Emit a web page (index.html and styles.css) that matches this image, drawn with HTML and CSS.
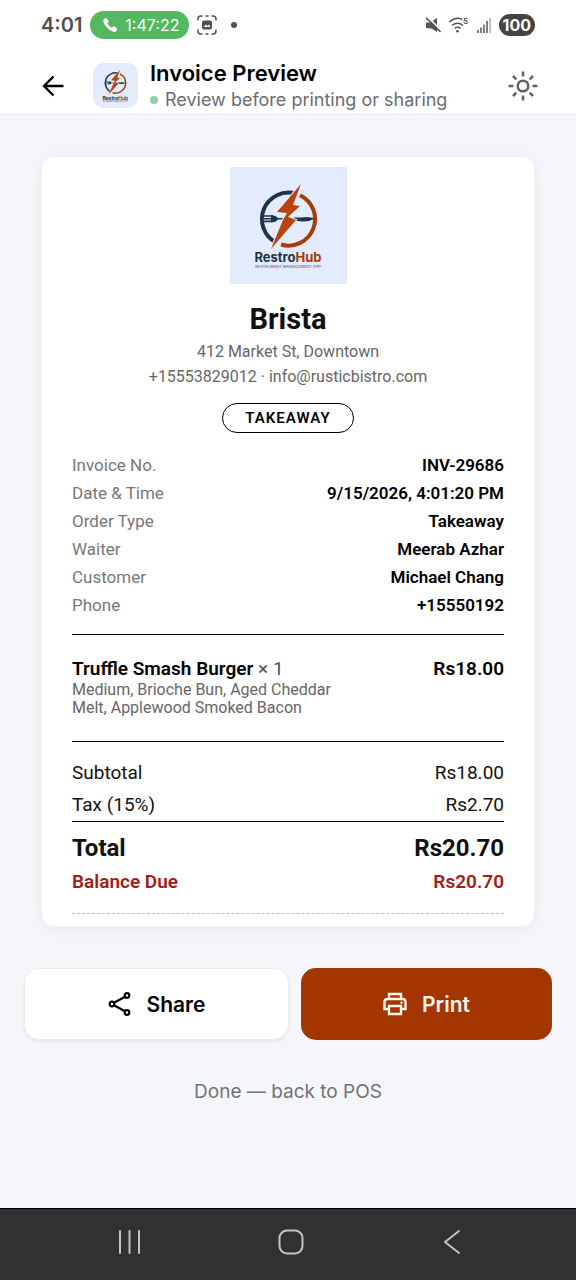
FILE: index.html
```html
<!DOCTYPE html>
<html lang="en">
<head>
<meta charset="utf-8">
<meta name="viewport" content="width=device-width, initial-scale=1">
<title>Invoice Preview</title>
<link rel="stylesheet" href="styles.css">
</head>
<body>
<div class="screen">
  <div class="status">
    <div class="status-left">
      <span class="clock">4:01</span>
      <span class="call">
        <svg width="16" height="16" viewBox="0 0 16 16"><path d="M1.500 2.500 L4 .7 L7 4.200 L5.300 6.300 Q7 9 9.800 10.700 L12 9 L15.500 12 L13.500 14.800 Q11 16 6.500 12 Q.5 6.500 1.500 2.500Z" fill="#fff"/></svg>
        1:47:22
      </span>
      <svg width="20" height="20" viewBox="0 0 20 20" fill="none" stroke="#505050" stroke-width="1.500" stroke-linecap="round"><path d="M1 5V4Q1 1 4 1H5 M9 1H11 M15 1H16Q19 1 19 4V5 M19 15V16Q19 19 16 19H15 M11 19H9 M5 19H4Q1 19 1 16V15"/><rect x="5" y="5.500" width="10" height="9" rx="2" fill="#505050" stroke="none"/><path d="M6.500 12 L9 9.500 L10.500 11 L12 9.500 L13.500 12Z" fill="#fff" stroke="none"/></svg>
      <span class="dot"></span>
    </div>
    <div class="status-right">
      <svg width="16" height="16" viewBox="0 0 16 16"><path d="M1 5.500H5.500L12 1V15L6.500 11.500L1 11Z" fill="#555"/><path d="M2.500 0L17 14" stroke="#fff" stroke-width="1.600"/><path d="M1 .8L15.500 15" stroke="#555" stroke-width="1.600"/></svg>
      <svg width="20" height="18" viewBox="0 0 20 18" fill="none" stroke="#555" stroke-width="1.600"><path d="M.5 6Q7 0 13 3.500 M3 9.500Q8.500 5 14 9.500 M5.500 12.500Q8.500 10 11.500 12.500"/><circle cx="8.500" cy="15.200" r="1.300" fill="#555" stroke="none"/><text x="14" y="8" class="wifi-band">5</text></svg>
      <svg width="14" height="16" viewBox="0 0 14 16" stroke="#555" stroke-width="1.500"><path d="M1 16V13 M4 16V10.500 M7 16V7.500 M10 16V4"/><path d="M13 16V1" stroke="#aaa"/></svg>
      <span class="battery">100</span>
    </div>
  </div>

  <header class="header">
    <button class="icon-btn" aria-label="Back"><svg width="22" height="22" viewBox="0 0 22 22" fill="none" stroke="#000" stroke-width="2.400"><path d="M21.500 11H2.500 M11.500 1.500L2 11L11.500 20.500"/></svg></button>
    <svg class="header-logo" viewBox="0 0 117 117">
      <rect width="117" height="117" rx="28" fill="#e4ebfc"/>
      <path d="M66 26.700A26.500 26.500 0 0 0 46 75.500" fill="none" stroke="#1f3347" stroke-width="4"/>
      <path d="M70 28.200A26.500 26.500 0 0 1 51 77.500" fill="none" stroke="#a63c08" stroke-width="4"/>
      <path d="M34 49H43 M34 51.700H54 M34 54.400H43" stroke="#1f3347" stroke-width="1.600"/>
      <path d="M41 48.200Q47 48.200 48 51.700Q47 55.200 41 55.200Z" fill="#1f3347"/>
      <path d="M64 50.500H71Q78 49 85 51.500Q77 56 69 54H62Z" fill="#1f3347"/>
      <path d="M71 17L47 45L57 46L53 53L41 82L66 53L58 50L70 39L63 38Z" fill="#b8430b" stroke="#e4ebfc" stroke-width="2" paint-order="stroke"/>
      <text x="58" y="95" text-anchor="middle" class="logo-name"><tspan fill="#1f3347">Restro</tspan><tspan fill="#a63c08">Hub</tspan></text>
      <text x="58" y="101" text-anchor="middle" class="logo-tag">RESTAURANT MANAGEMENT APP</text>
    </svg>
    <div class="heading">
      <h1 class="title">Invoice Preview</h1>
      <p class="subtitle"><span class="live"></span>Review before printing or sharing</p>
    </div>
    <button class="icon-btn" aria-label="Toggle theme"><svg width="30" height="30" viewBox="0 0 30 30" fill="none" stroke="#606266" stroke-width="2.500"><circle cx="15" cy="15" r="5.300"/><path d="M15 .5V5.500 M15 24.500V29.500 M.5 15H5.500 M24.500 15H29.500 M5 5L8.300 8.300 M21.700 21.700L25 25 M25 5L21.700 8.300 M8.300 21.700L5 25"/></svg></button>
  </header>

  <main class="main">
    <section class="receipt">
      <svg class="receipt-logo" viewBox="0 0 117 117">
        <rect width="117" height="117" fill="#e4ebfc"/>
        <path d="M66 26.700A26.500 26.500 0 0 0 46 75.500" fill="none" stroke="#1f3347" stroke-width="4"/>
        <path d="M70 28.200A26.500 26.500 0 0 1 51 77.500" fill="none" stroke="#a63c08" stroke-width="4"/>
        <path d="M34 49H43 M34 51.700H54 M34 54.400H43" stroke="#1f3347" stroke-width="1.600"/>
        <path d="M41 48.200Q47 48.200 48 51.700Q47 55.200 41 55.200Z" fill="#1f3347"/>
        <path d="M64 50.500H71Q78 49 85 51.500Q77 56 69 54H62Z" fill="#1f3347"/>
        <path d="M71 17L47 45L57 46L53 53L41 82L66 53L58 50L70 39L63 38Z" fill="#b8430b" stroke="#e4ebfc" stroke-width="2" paint-order="stroke"/>
        <text x="58" y="95" text-anchor="middle" class="logo-name"><tspan fill="#1f3347">Restro</tspan><tspan fill="#a63c08">Hub</tspan></text>
        <text x="58" y="101" text-anchor="middle" class="logo-tag">RESTAURANT MANAGEMENT APP</text>
      </svg>
      <h2 class="name">Brista</h2>
      <p class="contact">412 Market St, Downtown<br>+15553829012 · info@rusticbistro.com</p>
      <span class="pill">TAKEAWAY</span>
      <dl class="meta">
        <div class="row"><dt>Invoice No.</dt><dd>INV-29686</dd></div>
        <div class="row"><dt>Date &amp; Time</dt><dd>9/15/2026, 4:01:20 PM</dd></div>
        <div class="row"><dt>Order Type</dt><dd>Takeaway</dd></div>
        <div class="row"><dt>Waiter</dt><dd>Meerab Azhar</dd></div>
        <div class="row"><dt>Customer</dt><dd>Michael Chang</dd></div>
        <div class="row"><dt>Phone</dt><dd>+15550192</dd></div>
      </dl>
      <div class="item">
        <div class="row item-row"><span><b>Truffle Smash Burger</b> <span class="qty">× 1</span></span><b>Rs18.00</b></div>
        <p class="options">Medium, Brioche Bun, Aged Cheddar Melt, Applewood Smoked Bacon</p>
      </div>
      <dl class="sums">
        <div class="row"><dt>Subtotal</dt><dd>Rs18.00</dd></div>
        <div class="row"><dt>Tax (15%)</dt><dd>Rs2.70</dd></div>
      </dl>
      <dl class="totals">
        <div class="row total"><dt>Total</dt><dd>Rs20.70</dd></div>
        <div class="row due"><dt>Balance Due</dt><dd>Rs20.70</dd></div>
      </dl>
    </section>
    <div class="actions">
      <button class="btn share"><svg width="24" height="24" viewBox="0 0 24 24" fill="none" stroke="#000" stroke-width="2.200"><circle cx="19" cy="3.500" r="2.300"/><circle cx="4" cy="12" r="2.300"/><circle cx="19" cy="20.500" r="2.300"/><path d="M6 10.800L17 4.700 M6 13.200L17 19.300"/></svg>Share</button>
      <button class="btn print"><svg width="24" height="24" viewBox="0 0 24 24" fill="none" stroke="#fff5ee" stroke-width="2.400"><path d="M6 7V2H18V7 M6 17H1.500V10Q1.500 7 4.500 7H19.500Q22.500 7 22.500 10V17H18"/><path d="M6 14H18V22H6Z"/><circle cx="18.500" cy="10.800" r="1.200" fill="#fff5ee" stroke="none"/></svg>Print</button>
    </div>
    <button class="done">Done — back to POS</button>
  </main>

  <nav class="nav">
    <button class="icon-btn" aria-label="Recent apps"><svg width="26" height="26" viewBox="0 0 26 26" stroke="#c4c4c4" stroke-width="2" stroke-linecap="round"><path d="M3 2V24 M12.500 2V24 M22 2V24"/></svg></button>
    <button class="icon-btn" aria-label="Home"><svg width="26" height="26" viewBox="0 0 26 26" fill="none" stroke="#c4c4c4" stroke-width="2"><rect x="1.500" y="1.500" width="23" height="23" rx="7.500"/></svg></button>
    <button class="icon-btn" aria-label="Go back"><svg width="26" height="26" viewBox="0 0 26 26" fill="none" stroke="#c4c4c4" stroke-width="2" stroke-linecap="round" stroke-linejoin="round"><path d="M20 2L6 13L20 24"/></svg></button>
  </nav>
</div>
</body>
</html>
```
FILE: styles.css
```css
* { box-sizing: border-box; }
body { margin: 0; font-family: Inter, sans-serif; color: #000; background: #f5f6f9; }
h1, h2, p, dl, dd { margin: 0; }
button { font: inherit; border: 0; background: none; padding: 0; }
svg { display: block; flex: none; }
.screen { min-height: 100vh; display: flex; flex-direction: column; }

.status { height: 50px; padding: 0 41px; display: flex; justify-content: space-between; align-items: center; background: #fff; color: #505050; }
.status-left, .status-right { display: flex; align-items: center; gap: 8px; }
.clock { font-size: 20px; font-weight: 600; }
.call { display: flex; align-items: center; gap: 7px; height: 28px; padding: 0 10px 0 12px; border-radius: 14px; background: #53b860; color: #fff; font-size: 16px; }
.dot { width: 6px; height: 6px; margin-left: 6px; border-radius: 50%; background: #505050; }
.wifi-band { font: 700 8px Inter, sans-serif; fill: #555; stroke: none; }
.battery { height: 22px; line-height: 22px; padding: 0 4px; border-radius: 11px; background: #444; color: #fff; font-size: 16px; font-weight: 700; }

.header { height: 65px; padding: 7px 38px 0 42px; display: flex; align-items: center; background: #fff; border-bottom: 1px solid #e6e8ec; }
.header-logo { width: 45px; height: 45px; margin: 0 12px 0 29px; }
.heading { flex: 1; }
.title { font-size: 22px; line-height: 28px; font-weight: 600; }
.subtitle { display: flex; align-items: center; gap: 7px; font-size: 18px; line-height: 26px; color: #6b6d72; }
.live { width: 8px; height: 8px; border-radius: 50%; background: #8fd0a6; }
.logo-name { font: 700 13px Inter, sans-serif; }
.logo-tag { font: 400 4px Inter, sans-serif; fill: #44505e; }

.main { flex: 1; display: flex; flex-direction: column; padding: 42px 24px 0; }
.receipt { margin: 0 18px; padding: 10px 30px 12px; display: flex; flex-direction: column; background: #fff; border-radius: 12px; box-shadow: 0 2px 16px rgba(0, 0, 0, .06); font-family: Roboto, sans-serif; }
.receipt-logo { width: 117px; height: 117px; align-self: center; }
.name { margin-top: 17px; text-align: center; font-size: 29px; line-height: 36px; font-weight: 700; color: #111; }
.contact { margin-top: 2px; text-align: center; font-size: 16px; line-height: 25px; color: #666; }
.pill { align-self: center; margin-top: 14px; height: 30px; line-height: 28px; padding: 0 22px; border: 1px solid #000; border-radius: 15px; font-size: 15px; font-weight: 600; letter-spacing: 1px; }
.row { display: flex; justify-content: space-between; }
.meta { margin-top: 18px; padding-bottom: 15px; border-bottom: 1px solid #000; font-size: 17px; line-height: 28px; }
.meta dt { color: #777; }
.meta dd { font-weight: 600; }
.item { padding: 22px 0 24px; border-bottom: 1px solid #000; }
.item-row { font-size: 19px; line-height: 24px; }
.item-row b { font-weight: 600; }
.qty { color: #555; }
.options { width: 65%; font-size: 16px; line-height: 18px; color: #666; }
.sums { padding-top: 15px; border-bottom: 1px solid #000; font-size: 19px; line-height: 32px; color: #111; }
.totals { padding-bottom: 14px; border-bottom: 1px dashed #bbb; }
.total { padding-top: 9px; font-size: 24px; line-height: 34px; font-weight: 700; color: #111; }
.due { font-size: 19px; line-height: 34px; font-weight: 600; color: #9f1d16; }

.actions { display: flex; gap: 12px; margin-top: 42px; }
.btn { flex: 21 1 0; height: 72px; display: flex; align-items: center; justify-content: center; gap: 15px; border-radius: 15px; font-size: 21px; font-weight: 600; }
.share { flex-grow: 22; background: #fff; border: 1px solid #e9ebee; box-shadow: 0 2px 3px rgba(0, 0, 0, .06); }
.print { background: #a33600; color: #fff5ee; }
.done { align-self: center; margin-top: 38px; font-size: 19px; line-height: 28px; color: #6f7278; }

.nav { height: 72px; padding: 0 111px 5px 117px; display: flex; align-items: center; justify-content: space-between; background: #313133; border-top: 1px solid #000; }
```
